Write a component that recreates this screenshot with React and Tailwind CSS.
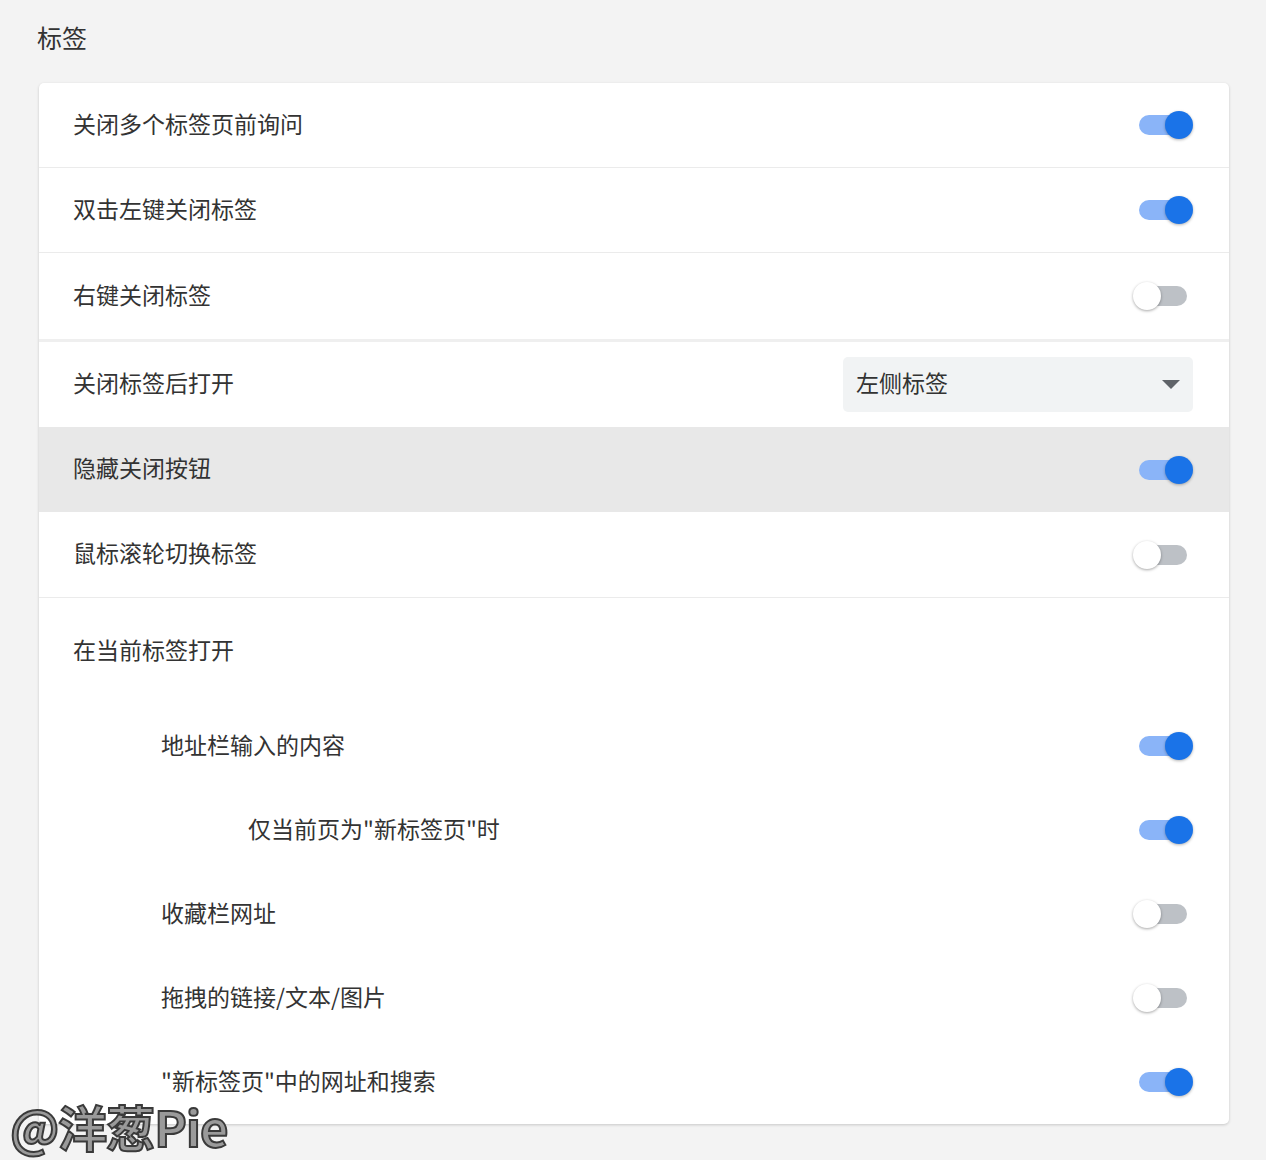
const font = { fontFamily: '"Microsoft YaHei", "Noto Sans CJK SC", "Noto Sans", sans-serif' };

function Toggle({ on }) {
  return (
    <div className="relative w-[48px] h-[20px] shrink-0">
      <div className={`absolute inset-0 rounded-full ${on ? "bg-[#8ab4f8]" : "bg-[#bdc1c6]"}`} />
      <div
        className={`absolute top-[-4px] w-[28px] h-[28px] rounded-full ${
          on
            ? "right-[-6px] bg-[#1a73e8] shadow-[0_1px_3px_rgba(0,0,0,0.3)]"
            : "left-[-6px] bg-white shadow-[0_1px_3px_rgba(0,0,0,0.35)]"
        }`}
      />
    </div>
  );
}

function Row({ label, on, indent = 0, border = true, highlight = false, h = "h-[85px]" }) {
  const pl = indent === 2 ? "pl-[209px]" : indent === 1 ? "pl-[122px]" : "pl-[34px]";
  return (
    <div
      className={`flex items-center justify-between ${h} ${pl} pr-[42px] ${
        border ? "border-b border-[#ebebeb]" : ""
      } ${highlight ? "bg-[#e8e8e8]" : ""}`}
    >
      <span className="text-[23px] text-[#333] mb-[4px]">{label}</span>
      <Toggle on={on} />
    </div>
  );
}

export default function App() {
  return (
    <div className="relative min-h-[1160px] bg-[#f3f3f3] pl-[39px] pr-[37px] pt-[20px]" style={font}>
      <h1 className="text-[25px] text-[#333] leading-[34px] ml-[-2px] mb-[29px]">标签</h1>

      <div className="bg-white rounded-[5px] shadow-[0_1px_3px_rgba(0,0,0,0.18)] overflow-hidden">
        <Row label="关闭多个标签页前询问" on />
        <Row label="双击左键关闭标签" on />
        <Row label="右键关闭标签" on={false} border={false} h="h-[86px]" />
        <div className="h-[3px] bg-[#efefef]" />

        <div className="flex items-center justify-between h-[85px] pl-[34px] pr-[36px]">
          <span className="text-[23px] text-[#333] mb-[4px]">关闭标签后打开</span>
          <div className="flex items-center justify-between w-[350px] h-[55px] bg-[#f1f3f4] rounded-[5px] pl-[13px] pr-[13px]">
            <span className="text-[23px] text-[#333] mb-[4px]">左侧标签</span>
            <svg width="18" height="9" viewBox="0 0 18 9">
              <path d="M0 0 H18 L9 9 Z" fill="#5f6368" />
            </svg>
          </div>
        </div>

        <Row label="隐藏关闭按钮" on highlight border={false} />
        <Row label="鼠标滚轮切换标签" on={false} h="h-[86px]" />

        <div className="flex items-center h-[106px] pl-[34px]">
          <span className="text-[23px] text-[#333] mb-[4px]">在当前标签打开</span>
        </div>
        <Row label="地址栏输入的内容" on indent={1} border={false} h="h-[84px]" />
        <Row label='仅当前页为"新标签页"时' on indent={2} border={false} h="h-[84px]" />
        <Row label="收藏栏网址" on={false} indent={1} border={false} h="h-[84px]" />
        <Row label="拖拽的链接/文本/图片" on={false} indent={1} border={false} h="h-[84px]" />
        <Row label='"新标签页"中的网址和搜索' on indent={1} border={false} h="h-[84px]" />
      </div>

      <div className="absolute left-[10px] top-[1101px] text-[49px] font-bold leading-none text-[#9a9a9a] [-webkit-text-stroke:2px_#3a3a3a] tracking-[-1px]">
        @洋葱Pie
      </div>
    </div>
  );
}
